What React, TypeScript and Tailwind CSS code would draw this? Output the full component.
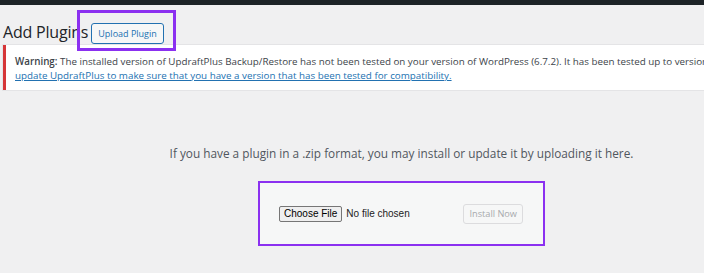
const font = { fontFamily: '"Open Sans", "Noto Sans", sans-serif' }

export default function App() {
  return (
    <div
      className="w-[704px] h-[273px] overflow-hidden bg-[#f0f0f1] text-[#3c434a]"
      style={font}
    >
      {/* admin bar */}
      <div className="h-[5px] bg-[#1d2327]" />

      <div className="w-[800px] pl-[3px]">
        {/* page header */}
        <div className="flex items-start h-[40px]">
          <h1 className="text-[16px] leading-[22px] text-[#1d2327] mt-[16px] tracking-[-0.2px]">Add Plugins</h1>
          <div className="relative ml-[3px] mt-[14px]">
            <button className="h-[21px] px-[6px] border border-[#2271b1] rounded-[3px] bg-[#f6f7f7] text-[9px] text-[#2271b1]">
              Upload Plugin
            </button>
            {/* highlight */}
            <div className="absolute -left-[14px] -right-[12px] -top-[9px] -bottom-[7px] border-[3px] border-[#8b30f0]" />
          </div>
        </div>

        {/* compatibility warning */}
        <div className="bg-white border-l-[3px] border-[#d63638] shadow-[0_0_0_1px_#e4e4e6] pl-[9px] pt-[10px] pb-[7px] text-[9.8px] leading-[14px] whitespace-nowrap">
          <div>
            <strong className="font-semibold">Warning:</strong> The installed version of UpdraftPlus Backup/Restore has not been tested on your version of WordPress (6.7.2). It has been tested up to version 6.6. You should
          </div>
          <div>
            <a className="text-[#2271b1] underline">
              update UpdraftPlus to make sure that you have a version that has been tested for compatibility.
            </a>
          </div>
        </div>

        {/* upload */}
        <p className="mt-[54px] text-center text-[11.8px] leading-[18px] text-[#50575e]">
          If you have a plugin in a .zip format, you may install or update it by uploading it here.
        </p>

        <div className="flex justify-center mt-[19px]">
          <div className="w-[287px] h-[65px] border-2 border-[#8b30f0] bg-[#f6f7f7] flex items-center justify-between pl-[19px] pr-[20px]">
            <div className="flex items-center gap-[4px]" style={{ fontFamily: '"Liberation Sans", Arial, sans-serif' }}>
              <button className="h-[16px] px-[4px] border border-[#767676] rounded-[2px] bg-[#efefef] text-[10px] leading-none text-black">
                Choose File
              </button>
              <span className="text-[10px] text-[#222]">No file chosen</span>
            </div>
            <button
              disabled
              className="h-[20px] px-[5px] border border-[#dcdcde] rounded-[3px] bg-[#f6f7f7] text-[9.2px] text-[#a7aaad]"
            >
              Install Now
            </button>
          </div>
        </div>
      </div>
    </div>
  )
}
